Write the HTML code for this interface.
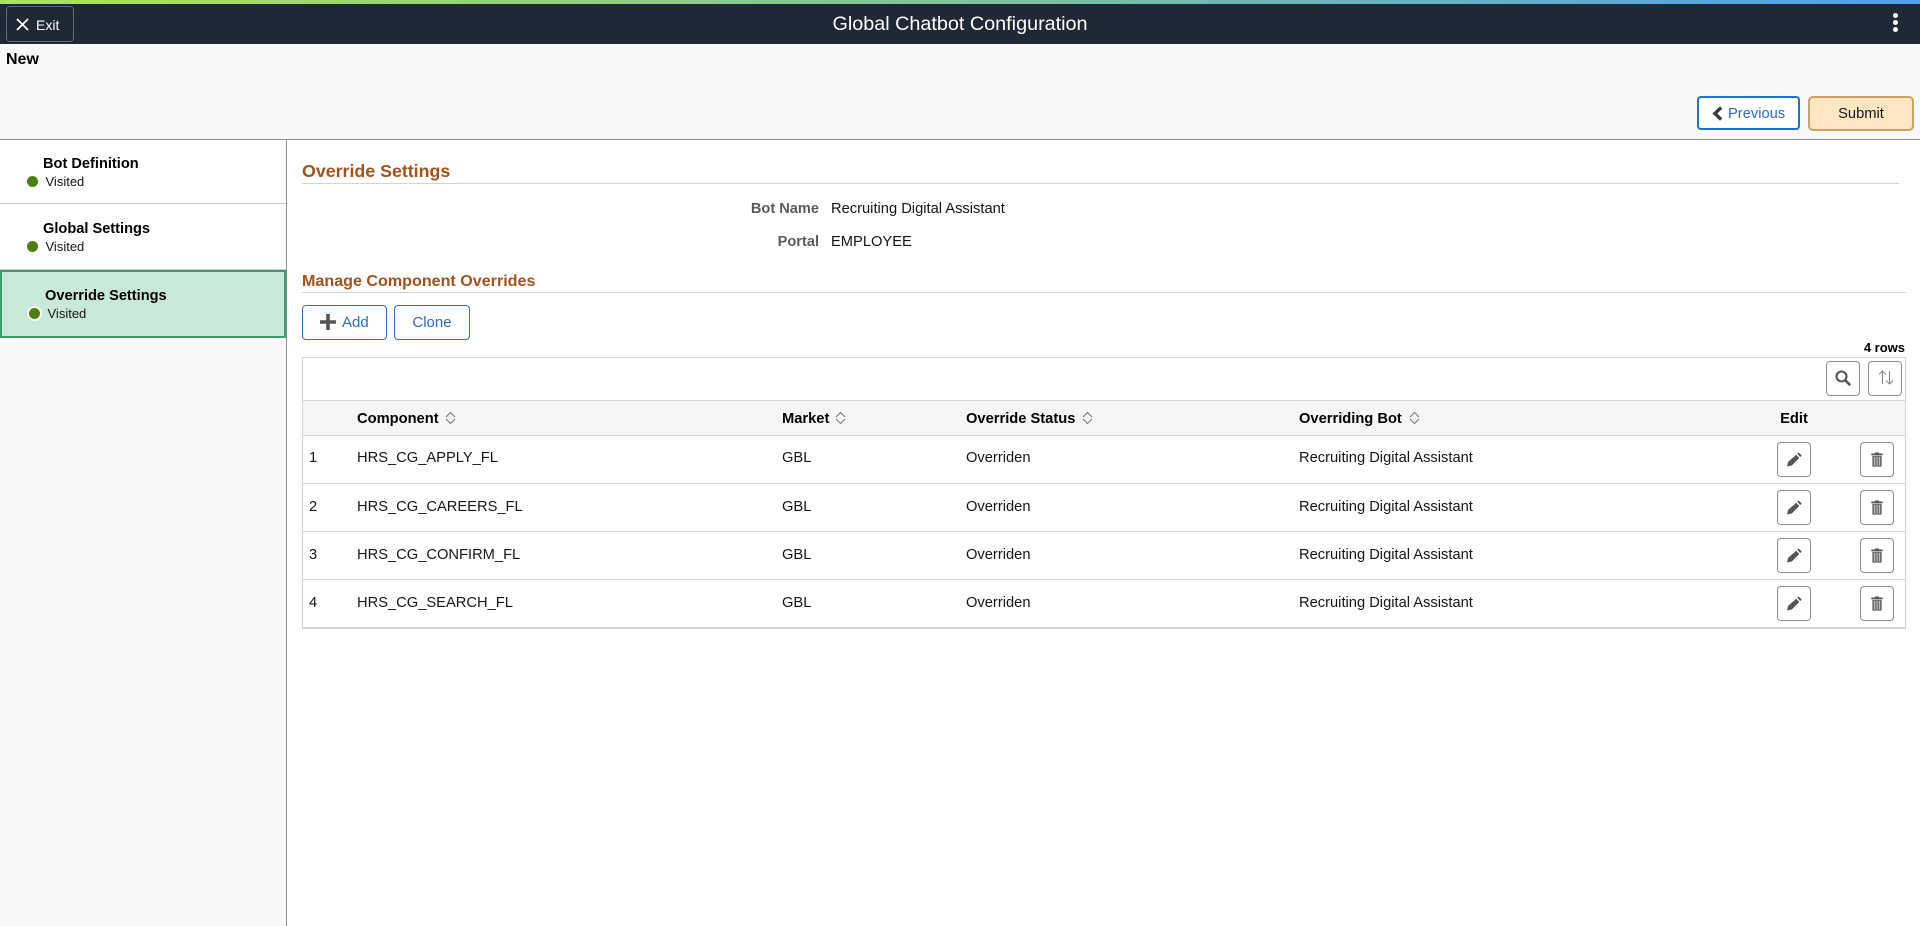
<!DOCTYPE html>
<html lang="en"><head><meta charset="utf-8"><title>Global Chatbot Configuration</title>
<style>
*{box-sizing:border-box}
html,body{margin:0;padding:0;width:1920px;height:926px;overflow:hidden;background:#fff;font-family:"Liberation Sans",Arial,sans-serif;font-size:14px;color:#161513}
.a{position:absolute}
.t{position:absolute;white-space:nowrap;line-height:18px;height:18px;font-size:14.7px}
.btn{position:absolute;background:#fff;border:1px solid #858e96;border-radius:4px}
.blue{border:1px solid #2b6fc2;position:absolute;background:#fff;border-radius:4px}
.b{font-weight:bold;font-size:14.6px}
.h{font-weight:bold;color:#000;font-size:14.7px}
.line{position:absolute;background:#d0d5dd;height:1px}
.dot{position:absolute;width:11px;height:11px;border-radius:50%;background:#4b7f12}
.sort{position:absolute;width:11px;height:14px}
svg{display:block}
</style></head><body>
<div class="a" style="left:0;top:0;width:1920px;height:4px;background:linear-gradient(90deg,#aee553 0%,#7cc49a 50%,#4f9ff2 100%)"></div>
<div class="a" style="left:0;top:4px;width:1920px;height:40px;background:#1e2935"></div>
<div class="a" style="left:6px;top:6px;width:68px;height:36px;border:1px solid #5d6874;border-radius:4px"></div>
<svg class="a" style="left:16px;top:18px" width="13" height="13" viewBox="0 0 13 13"><path d="M1 1L12 12M12 1L1 12" stroke="#fff" stroke-width="1.8"/></svg>
<div class="t" style="left:36px;top:16px;color:#fff;font-size:14px">Exit</div>
<div class="t" style="left:760px;width:400px;top:13px;height:22px;line-height:22px;text-align:center;color:#fff;font-size:19.8px">Global Chatbot Configuration</div>
<div class="a" style="left:1893px;top:13px;width:5px;height:5px;border-radius:50%;background:#fff"></div>
<div class="a" style="left:1893px;top:20px;width:5px;height:5px;border-radius:50%;background:#fff"></div>
<div class="a" style="left:1893px;top:27px;width:5px;height:5px;border-radius:50%;background:#fff"></div>

<div class="a" style="left:0;top:44px;width:1920px;height:95px;background:#f8f8f8"></div>
<div class="a" style="left:0;top:139px;width:1920px;height:1px;background:#8b8f93"></div>
<div class="t b" style="left:6px;top:51px;font-size:16px;color:#000">New</div>

<div class="a" style="left:1697px;top:96px;width:103px;height:34px;background:#fff;border:2px solid #2270c9;border-radius:4px"></div>
<svg class="a" style="left:1712px;top:106px" width="11" height="15" viewBox="0 0 11 15"><path d="M9.200 1.500L2.800 7.500L9.200 13.500" fill="none" stroke="#3b3b3b" stroke-width="3.300"/></svg>
<div class="t" style="left:1728px;top:105px;color:#2b6cc4">Previous</div>
<div class="a" style="left:1808px;top:96px;width:106px;height:35px;background:#fde6c2;border:2px solid #cba268;border-radius:5px"></div>
<div class="t" style="left:1808px;width:106px;text-align:center;top:105px;color:#161513">Submit</div>

<!-- sidebar -->
<div class="a" style="left:0;top:140px;width:286px;height:786px;background:#f8f8f8"></div>
<div class="a" style="left:286px;top:140px;width:1px;height:786px;background:#8b8f93"></div>
<div class="a" style="left:0;top:140px;width:286px;height:64px;background:#fff;border-bottom:1px solid #c9cfd6"></div>
<div class="a" style="left:0;top:205px;width:286px;height:64px;background:#fff"></div>
<div class="a" style="left:0;top:269px;width:286px;height:1px;background:#c9cfd6"></div>
<div class="a" style="left:0;top:270px;width:286px;height:68px;background:#c9e9d8;border:2px solid #3f9c6e"></div>
<div class="t b" style="left:43px;top:155px;color:#000">Bot Definition</div>
<div class="t" style="left:45.500px;top:173px;font-size:13px">Visited</div>
<div class="dot" style="left:27px;top:176px"></div>
<div class="t b" style="left:43px;top:220px;color:#000">Global Settings</div>
<div class="t" style="left:45.500px;top:238px;font-size:13px">Visited</div>
<div class="dot" style="left:27px;top:241px"></div>
<div class="t b" style="left:45px;top:287px;color:#000">Override Settings</div>
<div class="t" style="left:47.500px;top:305px;font-size:13px">Visited</div>
<div class="a" style="left:27px;top:306px;width:15px;height:15px;border-radius:50%;background:#4b7f12;border:2px solid #fff"></div>

<!-- main -->
<div class="t b" style="left:302px;top:162px;font-size:17.800px;color:#a2521a">Override Settings</div>
<div class="line" style="left:302px;top:183px;width:1597px"></div>
<div class="t b" style="left:620px;width:199px;text-align:right;top:200px;color:#5c5c5c">Bot Name</div>
<div class="t" style="left:831px;top:200px">Recruiting Digital Assistant</div>
<div class="t b" style="left:620px;width:199px;text-align:right;top:233px;color:#5c5c5c">Portal</div>
<div class="t" style="left:831px;top:233px">EMPLOYEE</div>
<div class="t b" style="left:302px;top:272px;font-size:16.100px;color:#a2521a">Manage Component Overrides</div>
<div class="line" style="left:302px;top:292px;width:1604px"></div>

<div class="blue" style="left:302px;top:305px;width:85px;height:35px"></div>
<svg class="a" style="left:320px;top:314px" width="16" height="16" viewBox="0 0 16 16"><path d="M8 0V16M0 8H16" stroke="#555" stroke-width="3.600"/></svg>
<div class="t" style="left:342px;top:314px;color:#2b6cc4;font-size:15px">Add</div>
<div class="blue" style="left:394px;top:305px;width:76px;height:35px"></div>
<div class="t" style="left:394px;width:76px;text-align:center;top:314px;color:#2b6cc4;font-size:15px">Clone</div>

<div class="t b" style="left:1800px;width:105px;text-align:right;top:339px;font-size:13px;color:#000">4 rows</div>

<!-- table frame -->
<div class="a" style="left:302px;top:357px;width:1604px;height:272px;border:1px solid #d0d5dd;border-bottom:2px solid #d0d5dd;background:#fff"></div>
<div class="a" style="left:303px;top:400px;width:1602px;height:36px;background:#f6f6f6;border-top:1px solid #d0d5dd;border-bottom:1px solid #d0d5dd"></div>
<div class="line" style="left:303px;top:483px;width:1602px"></div>
<div class="line" style="left:303px;top:531px;width:1602px"></div>
<div class="line" style="left:303px;top:579px;width:1602px"></div>

<div class="btn" style="left:1826px;top:361px;width:34px;height:35px"></div>
<svg class="a" style="left:1835px;top:370px" width="16" height="16" viewBox="0 0 16 16"><circle cx="6.500" cy="6.500" r="5" fill="none" stroke="#555" stroke-width="2.100"/><path d="M10.200 10.200L15.200 15.200" stroke="#555" stroke-width="2.600"/></svg>
<div class="btn" style="left:1868px;top:361px;width:34px;height:35px"></div>
<svg class="a" style="left:1878px;top:370px" width="16" height="15" viewBox="0 0 16 15"><path d="M4.500 14V1M1 4.500L4.500 1L8 4.500M11.500 1V14M8 10.500L11.500 14L15 10.500" fill="none" stroke="#858585" stroke-width="1"/></svg>

<div class="t h" style="left:357px;top:410px">Component</div>
<svg class="sort" style="left:445px;top:411px" viewBox="0 0 11 14"><path d="M1 6L5.500 1.500L10 6M1 8L5.500 12.500L10 8" fill="none" stroke="#777" stroke-width="1"/></svg>
<div class="t h" style="left:782px;top:410px">Market</div>
<svg class="sort" style="left:835px;top:411px" viewBox="0 0 11 14"><path d="M1 6L5.500 1.500L10 6M1 8L5.500 12.500L10 8" fill="none" stroke="#777" stroke-width="1"/></svg>
<div class="t h" style="left:966px;top:410px">Override Status</div>
<svg class="sort" style="left:1082px;top:411px" viewBox="0 0 11 14"><path d="M1 6L5.500 1.500L10 6M1 8L5.500 12.500L10 8" fill="none" stroke="#777" stroke-width="1"/></svg>
<div class="t h" style="left:1299px;top:410px">Overriding Bot</div>
<svg class="sort" style="left:1409px;top:411px" viewBox="0 0 11 14"><path d="M1 6L5.500 1.500L10 6M1 8L5.500 12.500L10 8" fill="none" stroke="#777" stroke-width="1"/></svg>
<div class="t h" style="left:1754px;width:80px;text-align:center;top:410px">Edit</div>

<div class="t" style="left:309px;top:449px">1</div>
<div class="t" style="left:357px;top:449px">HRS_CG_APPLY_FL</div>
<div class="t" style="left:782px;top:449px">GBL</div>
<div class="t" style="left:966px;top:449px">Overriden</div>
<div class="t" style="left:1299px;top:449px">Recruiting Digital Assistant</div>

<div class="t" style="left:309px;top:498px">2</div>
<div class="t" style="left:357px;top:498px">HRS_CG_CAREERS_FL</div>
<div class="t" style="left:782px;top:498px">GBL</div>
<div class="t" style="left:966px;top:498px">Overriden</div>
<div class="t" style="left:1299px;top:498px">Recruiting Digital Assistant</div>

<div class="t" style="left:309px;top:546px">3</div>
<div class="t" style="left:357px;top:546px">HRS_CG_CONFIRM_FL</div>
<div class="t" style="left:782px;top:546px">GBL</div>
<div class="t" style="left:966px;top:546px">Overriden</div>
<div class="t" style="left:1299px;top:546px">Recruiting Digital Assistant</div>

<div class="t" style="left:309px;top:594px">4</div>
<div class="t" style="left:357px;top:594px">HRS_CG_SEARCH_FL</div>
<div class="t" style="left:782px;top:594px">GBL</div>
<div class="t" style="left:966px;top:594px">Overriden</div>
<div class="t" style="left:1299px;top:594px">Recruiting Digital Assistant</div>

<!-- row buttons -->
<div class="btn" style="left:1777px;top:442px;width:34px;height:35px"></div>
<div class="btn" style="left:1860px;top:442px;width:34px;height:35px"></div>
<div class="btn" style="left:1777px;top:490px;width:34px;height:35px"></div>
<div class="btn" style="left:1860px;top:490px;width:34px;height:35px"></div>
<div class="btn" style="left:1777px;top:538px;width:34px;height:35px"></div>
<div class="btn" style="left:1860px;top:538px;width:34px;height:35px"></div>
<div class="btn" style="left:1777px;top:586px;width:34px;height:35px"></div>
<div class="btn" style="left:1860px;top:586px;width:34px;height:35px"></div>

<svg class="a" style="left:1787px;top:452px" width="15" height="15" viewBox="0 0 15 15"><path d="M0 14.500L1 10L9.300 2.800L12.300 6L4.800 13.500ZM10.300 1.800L11.500 .5L14.800 3.500L13.300 5Z" fill="#555"/></svg>
<svg class="a" style="left:1787px;top:500px" width="15" height="15" viewBox="0 0 15 15"><path d="M0 14.500L1 10L9.300 2.800L12.300 6L4.800 13.500ZM10.300 1.800L11.500 .5L14.800 3.500L13.300 5Z" fill="#555"/></svg>
<svg class="a" style="left:1787px;top:548px" width="15" height="15" viewBox="0 0 15 15"><path d="M0 14.500L1 10L9.300 2.800L12.300 6L4.800 13.500ZM10.300 1.800L11.500 .5L14.800 3.500L13.300 5Z" fill="#555"/></svg>
<svg class="a" style="left:1787px;top:596px" width="15" height="15" viewBox="0 0 15 15"><path d="M0 14.500L1 10L9.300 2.800L12.300 6L4.800 13.500ZM10.300 1.800L11.500 .5L14.800 3.500L13.300 5Z" fill="#555"/></svg>

<svg class="a" style="left:1871px;top:452px" width="12" height="15" viewBox="0 0 12 15"><path d="M4 1.500V.5H8V1.500H11.700V3.200H.3V1.500Z" fill="#555"/><path d="M1.300 3.800H10.700V14.700H1.300Z" fill="#707070"/><path d="M3.500 5V13.500M6 5V13.500M8.500 5V13.500" stroke="#c8c8c8" stroke-width=".9"/></svg>
<svg class="a" style="left:1871px;top:500px" width="12" height="15" viewBox="0 0 12 15"><path d="M4 1.500V.5H8V1.500H11.700V3.200H.3V1.500Z" fill="#555"/><path d="M1.300 3.800H10.700V14.700H1.300Z" fill="#707070"/><path d="M3.500 5V13.500M6 5V13.500M8.500 5V13.500" stroke="#c8c8c8" stroke-width=".9"/></svg>
<svg class="a" style="left:1871px;top:548px" width="12" height="15" viewBox="0 0 12 15"><path d="M4 1.500V.5H8V1.500H11.700V3.200H.3V1.500Z" fill="#555"/><path d="M1.300 3.800H10.700V14.700H1.300Z" fill="#707070"/><path d="M3.500 5V13.500M6 5V13.500M8.500 5V13.500" stroke="#c8c8c8" stroke-width=".9"/></svg>
<svg class="a" style="left:1871px;top:596px" width="12" height="15" viewBox="0 0 12 15"><path d="M4 1.500V.5H8V1.500H11.700V3.200H.3V1.500Z" fill="#555"/><path d="M1.300 3.800H10.700V14.700H1.300Z" fill="#707070"/><path d="M3.500 5V13.500M6 5V13.500M8.500 5V13.500" stroke="#c8c8c8" stroke-width=".9"/></svg>
</body></html>
